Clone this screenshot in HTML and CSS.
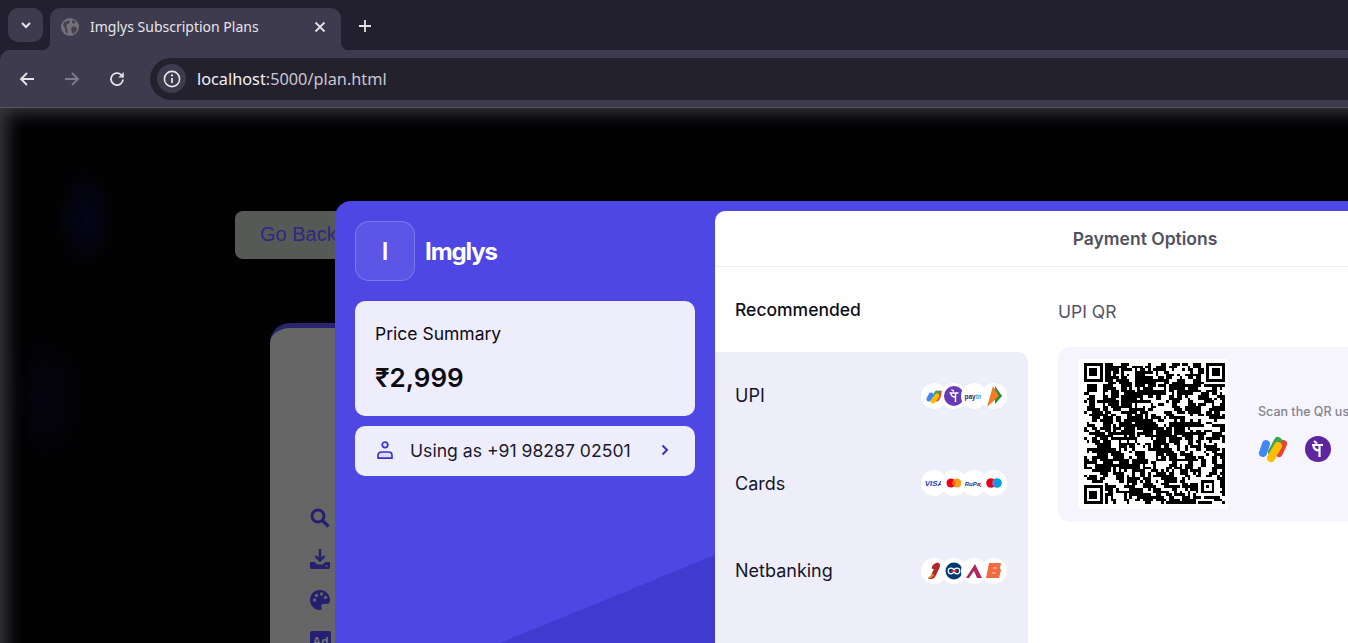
FILE: index.html
```html
<!DOCTYPE html>
<html lang="en">
<head>
<meta charset="utf-8">
<title>Imglys Subscription Plans</title>
<link rel="stylesheet" href="styles.css">
</head>
<body>
<header class="chrome">
  <div class="tabstrip">
    <div class="tab-search">
      <svg width="14" height="14" viewBox="0 0 14 14"><path d="M3 5l4 4 4-4" class="ic" stroke-width="2"/></svg>
    </div>
    <div class="tab">
      <svg class="favicon" width="18" height="18" viewBox="0 0 18 18"><circle cx="9" cy="9" r="9" fill="#73717c"/><path d="M3 4c2 0 3-1 5-2 1 2 1 3-1 4S5 8 6 10c1 2 0 4 1 6-2-1-3-3-3-5S2 8 2 7zM11 9c2-1 4 0 5 1 0 3-2 5-4 6-1-2-3-5-1-7zM11 2c2 0 3 1 4 2l-3 2c-1-1-1-3-1-4z" fill="#46434f"/></svg>
      <span class="tab-title">Imglys Subscription Plans</span>
      <svg class="tab-close" width="12" height="12" viewBox="0 0 12 12"><path d="M1.5 1.5l9 9M10.5 1.5l-9 9" class="ic" stroke-width="1.8"/></svg>
    </div>
    <svg class="newtab" width="14" height="14" viewBox="0 0 14 14"><path d="M7 1v12M1 7h12" class="ic" stroke-width="1.8"/></svg>
  </div>
  <div class="toolbar">
    <svg class="nav" width="18" height="18" viewBox="0 0 18 18"><path d="M16 9H3M9 3L3 9l6 6" class="ic" stroke-width="1.8"/></svg>
    <svg class="nav" width="18" height="18" viewBox="0 0 18 18"><path d="M2 9h13M9 3l6 6-6 6" class="ic dim" stroke-width="1.8"/></svg>
    <svg class="nav" width="18" height="18" viewBox="0 0 18 18"><path d="M15 9.5A6 6 0 1 1 13 4.6L15.5 7" class="ic" stroke-width="1.8"/><path d="M15.8 2v5.6h-5.6z" fill="#d9d8de"/></svg>
    <div class="omnibox">
      <span class="info">
        <svg width="18" height="18" viewBox="0 0 18 18"><circle cx="9" cy="9" r="7.6" class="ic" stroke-width="1.6"/><path d="M9 8v5" class="ic" stroke-width="1.8"/><circle cx="9" cy="5.4" r="1.1" fill="#e4e3e8"/></svg>
      </span>
      <span class="url"><b>localhost</b>:5000/plan.html</span>
    </div>
  </div>
</header>

<main class="page">
  <button class="go-back">Go Back</button>
  <section class="plan-card">
    <svg width="20" height="20" viewBox="0 0 20 20"><circle cx="8" cy="8" r="6" fill="none" stroke="#241f6e" stroke-width="3"/><path d="M12.5 12.5l6 6" stroke="#241f6e" stroke-width="3.2"/></svg>
    <svg width="20" height="20" viewBox="0 0 20 20"><path d="M10 0v11M5.5 7l4.500 4.500L14.500 7" fill="none" stroke="#241f6e" stroke-width="2.4"/><path d="M0 13h4.500l3 2.500h5l3-2.500H20v6a1 1 0 0 1-1 1H1a1 1 0 0 1-1-1z" fill="#241f6e"/><circle cx="16.500" cy="17" r=".9" fill="#666"/></svg>
    <svg width="20" height="20" viewBox="0 0 20 20"><path d="M10 0C4.500 0 0 4.200 0 9.800 0 15.500 4.500 20 9.500 20c2 0 2.500-1.300 2-2.500-.8-1.800 0-3.500 2-3.500H17c1.800 0 3-1.500 3-3.800C20 4.500 15.500 0 10 0z" fill="#241f6e"/><circle cx="4.500" cy="10" r="1.700" fill="#666"/><circle cx="6.500" cy="5.500" r="1.700" fill="#666"/><circle cx="11.500" cy="4" r="1.700" fill="#666"/><circle cx="15.500" cy="7.500" r="1.700" fill="#666"/></svg>
    <svg width="21" height="20" viewBox="0 0 21 20"><rect width="21" height="20" rx="2" fill="#241f6e"/><text x="10.500" y="15" text-anchor="middle" class="ad-text">Ad</text></svg>
  </section>
</main>

<div class="modal">
  <aside class="summary">
    <div class="brand">
      <div class="brand-logo">I</div>
      <div class="brand-name">Imglys</div>
    </div>
    <div class="price-card">
      <div class="price-label">Price Summary</div>
      <div class="price-value">₹2,999</div>
    </div>
    <div class="user-card">
      <svg width="20" height="20" viewBox="0 0 20 20"><circle cx="10" cy="4.800" r="2.800" fill="#dfdcf7" stroke="#3a31c9" stroke-width="1.700"/><path d="M3 18.200v-2.700c0-2.200 1.500-3.500 3.500-3.500h7c2 0 3.500 1.300 3.500 3.500v2.700z" fill="#dfdcf7" stroke="#3a31c9" stroke-width="1.700" stroke-linejoin="round"/></svg>
      <span class="user-text">Using as +91 98287 02501</span>
      <svg class="user-chevron" width="10" height="12" viewBox="0 0 10 12"><path d="M2.500 1.500L7 6l-4.500 4.500" fill="none" stroke="#3a31c9" stroke-width="2"/></svg>
    </div>
  </aside>

  <section class="options">
    <h2 class="options-title">Payment Options</h2>
    <div class="options-body">
      <div class="methods">
        <div class="methods-head">Recommended</div>
        <ul class="method-list">
          <li class="method">
            <span>UPI</span>
            <div class="badges">
              <span class="badge"><svg viewBox="0 0 26 26"><g fill="none" stroke-width="5" stroke-linecap="round"><path d="M19 10l-3 6" stroke="#ea4335"/><path d="M16 10l-4 7" stroke="#34a853"/><path d="M10 12l-2 4" stroke="#4285f4"/><path d="M16 13l-4 5" stroke="#fbbc04"/></g></svg></span>
              <span class="badge"><svg viewBox="0 0 26 26"><circle cx="13" cy="13" r="10" fill="#6739b7"/><path d="M8.500 10h9M14.500 10v9M10 10c0 3 1 4 4.500 4M10.500 6.500l2.500 2" fill="none" stroke="#fff" stroke-width="1.500"/></svg></span>
              <span class="badge"><svg viewBox="0 0 26 26"><text x="13" y="15.500" text-anchor="middle" class="paytm">pay<tspan fill="#00baf2">tm</tspan></text></svg></span>
              <span class="badge"><svg viewBox="0 0 26 26"><path d="M14 3l7 10-7 8z" fill="#1f8a4c"/><path d="M12 3l6 10-12 11z" fill="#f47b20"/></svg></span>
            </div>
          </li>
          <li class="method">
            <span>Cards</span>
            <div class="badges">
              <span class="badge"><svg viewBox="0 0 26 26"><text x="13" y="16" text-anchor="middle" class="visa">VISA</text></svg></span>
              <span class="badge"><svg viewBox="0 0 26 26"><circle cx="10" cy="13" r="4.500" fill="#eb001b"/><circle cx="16" cy="13" r="4.500" fill="#f79e1b"/><path d="M13 9.700a4.500 4.500 0 0 1 0 6.600 4.500 4.500 0 0 1 0-6.600z" fill="#ff5f00"/></svg></span>
              <span class="badge"><svg viewBox="0 0 26 26"><text x="13" y="15.500" text-anchor="middle" class="rupay">RuPay</text></svg></span>
              <span class="badge"><svg viewBox="0 0 26 26"><circle cx="10" cy="13" r="4.800" fill="#eb001b"/><circle cx="16" cy="13" r="4.800" fill="#00a1df"/><path d="M13 9.300a4.800 4.800 0 0 1 0 7.400 4.800 4.800 0 0 1 0-7.400z" fill="#7375cf"/></svg></span>
            </div>
          </li>
          <li class="method">
            <span>Netbanking</span>
            <div class="badges">
              <span class="badge"><svg viewBox="0 0 26 26"><path d="M15 5c4-1 5 2 3 6l-4 8c-1 2-6 3-7 1 2-1 3-2 4-5l2-4c-1 0-3 0-2-2 0-2 2-3 4-4z" fill="#ae282e"/><path d="M7 20c3-1 3-3 4-5l2 2c-1 2-5 5-6 3z" fill="#f58220"/></svg></span>
              <span class="badge"><svg viewBox="0 0 26 26"><circle cx="13" cy="13" r="8.500" fill="#003874"/><circle cx="10" cy="13" r="2.800" fill="none" stroke="#fff" stroke-width="1.300"/><circle cx="16" cy="13" r="2.800" fill="none" stroke="#fff" stroke-width="1.300"/><path d="M10 13h6" stroke="#ed1c24" stroke-width="1.500"/></svg></span>
              <span class="badge"><svg viewBox="0 0 26 26"><path d="M14 6l7 14h-5l-3-7-5 7H5z" fill="#ae285d"/></svg></span>
              <span class="badge"><svg viewBox="0 0 26 26"><path d="M8 5h12l-1 5 1 2-2 8H5z" fill="#f26a3f"/><path d="M12 10h4M11 15h4" stroke="#fff" stroke-width="1.200" opacity=".7"/></svg></span>
            </div>
          </li>
        </ul>
      </div>
      <div class="upi">
        <div class="upi-title">UPI QR</div>
        <div class="qr-card">
          <div class="qr-box"><svg id="qr" width="141" height="141" shape-rendering="crispEdges"></svg></div>
          <div class="qr-side">
            <div class="qr-note">Scan the QR using any UPI app</div>
            <div class="qr-apps">
              <svg width="30" height="28" viewBox="0 0 30 28"><g fill="none" stroke-linecap="round" stroke-width="8"><path d="M25 9l-4 9" stroke="#ea4335"/><path d="M20 6l-6 11" stroke="#34a853"/><path d="M8 9l-3 9" stroke="#4285f4"/><path d="M20 11l-7 12" stroke="#fbbc04"/></g></svg>
              <svg width="26" height="26" viewBox="0 0 26 26"><circle cx="13" cy="13" r="13" fill="#5f259f"/><path d="M7 9h11M14.500 9v12M8.500 9c0 4 2 5.500 6 5.500M9 5l3 2.500" fill="none" stroke="#fff" stroke-width="2.200"/></svg>
            </div>
          </div>
        </div>
      </div>
    </div>
  </section>
</div>
<script src="qr.js"></script>
</body>
</html>
```
FILE: styles.css
```css
* { box-sizing: border-box; }
html, body { margin: 0; height: 100%; }
body { overflow: hidden; background: #000; font-family: "Inter", sans-serif; }

.ic { fill: none; stroke: #e4e3e8; }
.ic.dim { stroke: #7f7c8a; }

.chrome { height: 108px; background: #221f2f; display: flex; flex-direction: column; }
.tabstrip { height: 50px; display: flex; align-items: flex-end; padding-left: 8px; }
.tab-search { width: 35px; height: 34px; margin-bottom: 8px; border-radius: 10px; background: #3e3b4e; display: flex; align-items: center; justify-content: center; }
.tab { position: relative; width: 291px; height: 42px; margin-left: 7px; background: #3e3b4e; border-radius: 10px 10px 0 0; display: flex; align-items: center; padding: 0 15px 5px 11px; }
.tab::before, .tab::after { content: ""; position: absolute; bottom: 0; width: 8px; height: 8px; }
.tab::before { left: -8px; background: radial-gradient(circle at 0 0, transparent 8px, #3e3b4e 8.5px); }
.tab::after { right: -8px; background: radial-gradient(circle at 100% 0, transparent 8px, #3e3b4e 8.5px); }
.tab-title { margin-left: 11px; flex: 1; color: #e6e5ea; font: 14px "Noto Sans", sans-serif; white-space: nowrap; }
.newtab { margin: 0 0 17px 17px; }
.toolbar { height: 58px; background: #3e3b4e; border-bottom: 1px solid #56535f; border-radius: 10px 0 0 0; display: flex; align-items: center; padding-left: 18px; }
.nav { margin-right: 27px; flex: none; }
.nav:nth-child(3) { margin-right: 24px; }
.omnibox { flex: 1; height: 42px; background: #24212f; border-radius: 21px 0 0 21px; display: flex; align-items: center; padding-left: 7px; }
.info { width: 29px; height: 29px; border-radius: 50%; background: #3e3b4e; display: flex; align-items: center; justify-content: center; }
.url { margin-left: 11px; color: #c9c7d1; font: 16.3px "Noto Sans", sans-serif; white-space: nowrap; }
.url b { font-weight: 400; color: #f1f0f4; }

.page { height: 535px; background:
    radial-gradient(ellipse 30px 50px at 85px 110px, #05041a 0, transparent 100%),
    radial-gradient(ellipse 40px 60px at 45px 290px, #05040f 0, transparent 100%),
    #020203;
  box-shadow: inset 16px 14px 16px -8px #34343a; padding: 103px 0 0 235px; overflow: hidden; }
.go-back { display: block; width: 130px; height: 48px; border: 0; border-radius: 8px; background: #575956; color: #2d2980; font: 20px "Liberation Sans", sans-serif; text-align: left; padding: 0 25px 2px; }
.plan-card { width: 300px; height: 400px; margin: 64px 0 0 35px; background: #666; border-top: 5px solid #28246e; border-radius: 20px 20px 0 0; padding: 180px 0 0 40px; display: flex; flex-direction: column; gap: 21px; }
.plan-card svg { flex: none; }
.ad-text { font: 700 12px "Liberation Sans", sans-serif; fill: #77777f; }

.modal { position: absolute; left: 335px; top: 201px; right: 0; bottom: 0; overflow: hidden; background: #4f47e4; border-radius: 16px 0 0 0; display: flex; }
.summary { position: relative; width: 380px; flex: none; padding: 20px; }
.summary::after { content: ""; position: absolute; right: 0; bottom: 0; width: 215px; height: 88px; background: #413acf; clip-path: polygon(0 100%, 100% 0, 100% 100%); }
.brand { display: flex; align-items: center; gap: 10px; margin-bottom: 20px; }
.brand-logo { width: 60px; height: 60px; border-radius: 14px; background: rgba(255,255,255,.08); border: 1px solid rgba(255,255,255,.2); color: #fff; font-size: 24px; font-weight: 600; display: flex; align-items: center; justify-content: center; }
.brand-name { color: #fff; font-size: 24px; font-weight: 700; letter-spacing: -1.1px; }
.price-card { height: 115px; background: #eeedfb; border-radius: 10px; padding: 21px 20px; color: #0b0b14; }
.price-label { font-size: 17.5px; line-height: 24px; }
.price-value { margin-top: 16px; font-size: 26px; line-height: 32px; font-weight: 600; }
.user-card { margin-top: 10px; height: 50px; background: #eeedfb; border-radius: 10px; padding: 0 25px 2px 20px; display: flex; align-items: center; color: #1a1a2b; }
.user-text { margin-left: 15px; flex: 1; font-size: 17.6px; }

.options { width: 860px; flex: none; margin-top: 10px; background: #fff; border-radius: 10px 0 0 0; display: flex; flex-direction: column; }
.options-title { margin: 0; height: 56px; flex: none; border-bottom: 1px solid #eff0f3; font-size: 17.5px; font-weight: 600; color: #51515f; display: flex; align-items: center; justify-content: center; }
.options-body { flex: 1; display: flex; min-height: 0; }
.methods { width: 313px; flex: none; display: flex; flex-direction: column; }
.methods-head { height: 85px; flex: none; padding-left: 20px; display: flex; align-items: center; font-size: 17.5px; font-weight: 500; color: #0f0f1a; }
.method-list { list-style: none; margin: 0; padding: 0; flex: 1; background: #eeeefb; border-radius: 0 10px 0 0; }
.method { height: 87.500px; padding: 0 21px 0 20px; display: flex; align-items: center; justify-content: space-between; font-size: 18px; color: #15152a; }
.badges { display: flex; }
.badge { width: 26px; height: 26px; border-radius: 50%; background: #fff; margin-left: -6px; flex: none; }
.badge svg { display: block; width: 26px; height: 26px; }
.paytm { font: 700 6.500px "Liberation Sans", sans-serif; fill: #17306e; }
.visa { font: italic 700 8px "Liberation Sans", sans-serif; fill: #2a3bd1; }
.rupay { font: italic 700 6px "Liberation Sans", sans-serif; fill: #2b2a72; }

.upi { flex: none; width: 547px; padding-left: 30px; }
.upi-title { height: 80px; padding-top: 33px; font-size: 17.5px; line-height: 24px; color: #55556a; }
.qr-card { width: 600px; height: 175px; background: #f6f5fd; border-radius: 12px; padding: 12px 0 0 20px; display: flex; gap: 30px; }
.qr-box { width: 150px; height: 150px; flex: none; background: #fff; padding: 4px 0 0 6px; }
.qr-box svg { display: block; }
.qr-side { padding-top: 44px; }
.qr-note { font-size: 12.500px; line-height: 18px; font-weight: 500; color: #84848f; white-space: nowrap; }
.qr-apps { margin-top: 14px; display: flex; align-items: center; gap: 17px; }
```
FILE: qr.js
```js
// Draws the QR code's modules into the #qr svg.
(function () {
  var n = 53;
  var svg = document.getElementById('qr');
  svg.setAttribute('viewBox', '0 0 ' + n + ' ' + n);
  var seed = 20501;
  function rnd() { seed = (seed * 16807) % 2147483647; return seed / 2147483647; }
  var g = [];
  var x, y;
  for (y = 0; y < n; y++) {
    g.push([]);
    for (x = 0; x < n; x++) {
      var p = 0.3;
      if (x > 0 && g[y][x - 1]) p += 0.25;
      if (y > 0 && g[y - 1][x]) p += 0.25;
      g[y].push(rnd() < p);
    }
  }
  function pattern(ox, oy, size) {
    for (var j = -1; j <= size; j++) for (var i = -1; i <= size; i++) {
      var a = ox + i, b = oy + j;
      if (a < 0 || b < 0 || a >= n || b >= n) continue;
      var edge = i < 0 || j < 0 || i >= size || j >= size;
      var ring = i === 0 || j === 0 || i === size - 1 || j === size - 1;
      var core = size === 7 ? (i >= 2 && i <= 4 && j >= 2 && j <= 4) : (i === 2 && j === 2);
      g[b][a] = !edge && (ring || core);
    }
  }
  pattern(0, 0, 7);
  pattern(n - 7, 0, 7);
  pattern(0, n - 7, 7);
  pattern(44, 44, 5);
  var d = '';
  for (y = 0; y < n; y++) for (x = 0; x < n; x++) if (g[y][x]) d += 'M' + x + ' ' + y + 'h1v1h-1z';
  var path = document.createElementNS('http://www.w3.org/2000/svg', 'path');
  path.setAttribute('d', d);
  path.setAttribute('fill', '#000');
  svg.appendChild(path);
})();
```
